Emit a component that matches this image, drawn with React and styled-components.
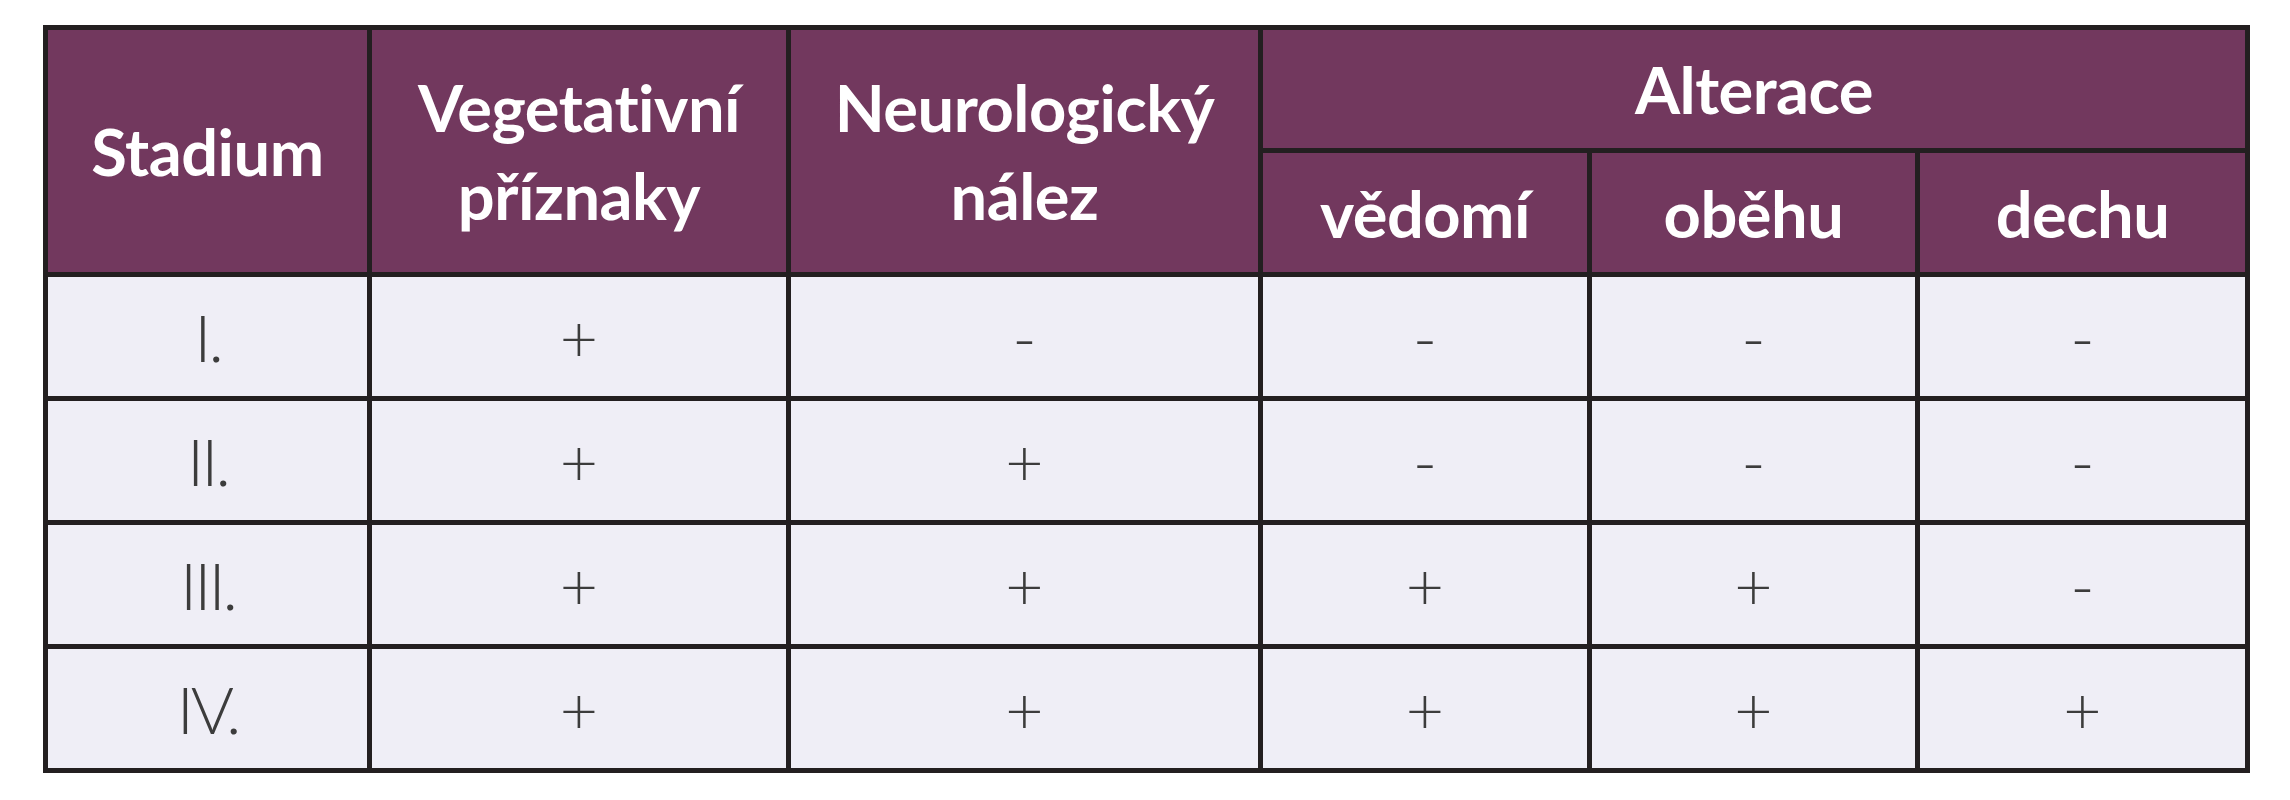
import styled, { createGlobalStyle } from "styled-components";

const GlobalStyle = createGlobalStyle`
    html, body {
        margin: 0;
        padding: 0;
        background: #ffffff;
    }
    body {
        font-family: Lato, "Open Sans", sans-serif;
    }
`

const Page = styled.div`
    padding: 25px 0 0 43px;
`

const Table = styled.table`
    border-collapse: collapse;
    table-layout: fixed;
    width: 2202px;
    border: 5px solid #231f20;
`

const HeadRow = styled.tr`
    height: ${(p) => p.$height}px;
`

const HeadCell = styled.th`
    background-color: #72385e;
    color: #ffffff;
    border: 5px solid #231f20;
    font-family: Lato, "Open Sans", sans-serif;
    font-weight: 700;
    font-size: 65px;
    line-height: 88px;
    letter-spacing: -0.5px;
    text-align: center;
    vertical-align: middle;
    padding: 0;
`

const BodyRow = styled.tr`
    height: 124px;
`

const BodyCell = styled.td`
    background-color: #efeef6;
    color: #3c3c3c;
    border: 5px solid #231f20;
    font-family: Lato, "Open Sans", sans-serif;
    font-weight: 300;
    font-size: 66px;
    letter-spacing: ${(p) => (p.$numeral ? "-3px" : "0")};
    text-align: center;
    vertical-align: middle;
    padding: 0;
`

const columns = [324, 419, 472, 329, 328, 330];

const rows = [
    ["I.", "+", "-", "-", "-", "-"],
    ["II.", "+", "+", "-", "-", "-"],
    ["III.", "+", "+", "+", "+", "-"],
    ["IV.", "+", "+", "+", "+", "+"],
];

export default function App() {
    return (
        <>
            <GlobalStyle/>
            <Page>
                <Table>
                    <colgroup>
                        {columns.map((w, i) => (
                            <col key={i} style={{width: w}}/>
                        ))}
                    </colgroup>
                    <thead>
                        <HeadRow $height={123}>
                            <HeadCell rowSpan={2}>Stadium</HeadCell>
                            <HeadCell rowSpan={2}>Vegetativní<br/>příznaky</HeadCell>
                            <HeadCell rowSpan={2}>Neurologický<br/>nález</HeadCell>
                            <HeadCell colSpan={3}>Alterace</HeadCell>
                        </HeadRow>
                        <HeadRow $height={124}>
                            <HeadCell>vědomí</HeadCell>
                            <HeadCell>oběhu</HeadCell>
                            <HeadCell>dechu</HeadCell>
                        </HeadRow>
                    </thead>
                    <tbody>
                        {rows.map((row, r) => (
                            <BodyRow key={r}>
                                {row.map((value, c) => (
                                    <BodyCell key={c} $numeral={c === 0}>{value}</BodyCell>
                                ))}
                            </BodyRow>
                        ))}
                    </tbody>
                </Table>
            </Page>
        </>
    );
}
